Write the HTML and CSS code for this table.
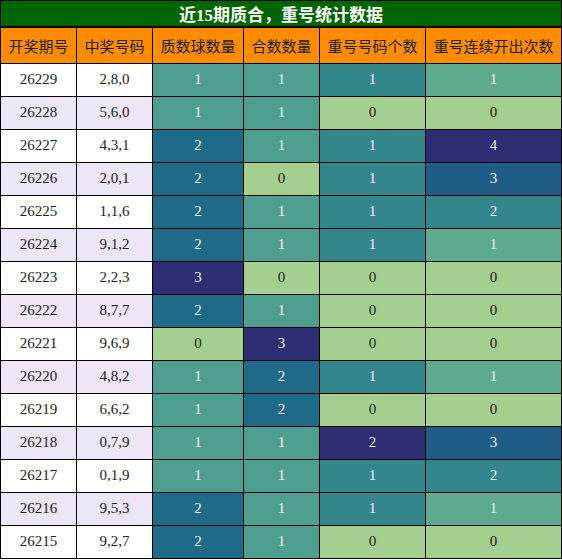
FILE: index.html
```html
<!DOCTYPE html>
<html lang="zh">
<head>
    <meta charset="UTF-8">
    <title>近15期质合，重号统计数据</title>
    <link rel="stylesheet" href="styles.css">
</head>
<body>
    <table class="stats">
        <colgroup>
            <col class="col-period">
            <col class="col-nums">
            <col class="col-prime">
            <col class="col-comp">
            <col class="col-repeat">
            <col class="col-streak">
        </colgroup>
        <thead>
            <tr><th class="title" colspan="6">近15期质合，重号统计数据</th></tr>
            <tr class="head">
                <th>开奖期号</th>
                <th>中奖号码</th>
                <th>质数球数量</th>
                <th>合数数量</th>
                <th>重号号码个数</th>
                <th>重号连续开出次数</th>
            </tr>
        </thead>
        <tbody>
            <tr><td>26229</td><td>2,8,0</td><td class="teal">1</td><td class="teal">1</td><td class="sea">1</td><td class="mint">1</td></tr>
            <tr><td>26228</td><td>5,6,0</td><td class="teal">1</td><td class="teal">1</td><td class="light">0</td><td class="light">0</td></tr>
            <tr><td>26227</td><td>4,3,1</td><td class="blue">2</td><td class="teal">1</td><td class="sea">1</td><td class="navy">4</td></tr>
            <tr><td>26226</td><td>2,0,1</td><td class="blue">2</td><td class="light">0</td><td class="sea">1</td><td class="deep">3</td></tr>
            <tr><td>26225</td><td>1,1,6</td><td class="blue">2</td><td class="teal">1</td><td class="sea">1</td><td class="sea">2</td></tr>
            <tr><td>26224</td><td>9,1,2</td><td class="blue">2</td><td class="teal">1</td><td class="sea">1</td><td class="mint">1</td></tr>
            <tr><td>26223</td><td>2,2,3</td><td class="navy">3</td><td class="light">0</td><td class="light">0</td><td class="light">0</td></tr>
            <tr><td>26222</td><td>8,7,7</td><td class="blue">2</td><td class="teal">1</td><td class="light">0</td><td class="light">0</td></tr>
            <tr><td>26221</td><td>9,6,9</td><td class="light">0</td><td class="navy">3</td><td class="light">0</td><td class="light">0</td></tr>
            <tr><td>26220</td><td>4,8,2</td><td class="teal">1</td><td class="blue">2</td><td class="sea">1</td><td class="mint">1</td></tr>
            <tr><td>26219</td><td>6,6,2</td><td class="teal">1</td><td class="blue">2</td><td class="light">0</td><td class="light">0</td></tr>
            <tr><td>26218</td><td>0,7,9</td><td class="teal">1</td><td class="teal">1</td><td class="navy">2</td><td class="deep">3</td></tr>
            <tr><td>26217</td><td>0,1,9</td><td class="teal">1</td><td class="teal">1</td><td class="sea">1</td><td class="sea">2</td></tr>
            <tr><td>26216</td><td>9,5,3</td><td class="blue">2</td><td class="teal">1</td><td class="sea">1</td><td class="mint">1</td></tr>
            <tr><td>26215</td><td>9,2,7</td><td class="blue">2</td><td class="teal">1</td><td class="light">0</td><td class="light">0</td></tr>
        </tbody>
    </table>
</body>
</html>
```

FILE: styles.css
```css
* {
    margin: 0;
    padding: 0;
    box-sizing: border-box;
}

body {
    background: white;
    font-family: "Liberation Serif", "Noto Sans CJK SC", serif;
    color: #222;
}

.stats {
    width: 562px;
    table-layout: fixed;
    border-collapse: collapse;
}

.col-period { width: 76px; }
.col-nums { width: 76px; }
.col-prime { width: 91px; }
.col-comp { width: 76px; }
.col-repeat { width: 106px; }
.col-streak { width: 136px; }

.stats th,
.stats td {
    border: 1px solid #000;
    text-align: center;
    vertical-align: middle;
    padding: 0;
}

.title {
    height: 26px;
    background: #006400;
    color: white;
    font-family: "Liberation Serif", "Noto Sans CJK SC", sans-serif;
    font-size: 17px;
    font-weight: bold;
    border-bottom-width: 2px !important;
}

.head th {
    height: 36px;
    background: #ff8c00;
    font-family: "Noto Sans CJK SC", sans-serif;
    font-size: 15px;
    font-weight: normal;
    color: #222;
}

.stats td {
    height: 33px;
    font-size: 15px;
    background: white;
}

.stats tbody tr:nth-child(even) td:nth-child(-n+2) {
    background: #ede6f4;
}

.stats td.light { background: #a4cf8e; color: #222; }
.stats td.mint { background: #5eab8f; color: #eee; }
.stats td.teal { background: #4f9f90; color: #eee; }
.stats td.sea { background: #32868c; color: #eee; }
.stats td.blue { background: #1f6a87; color: #eee; }
.stats td.deep { background: #1f5d87; color: #eee; }
.stats td.navy { background: #2d2f72; color: #eee; }
```
